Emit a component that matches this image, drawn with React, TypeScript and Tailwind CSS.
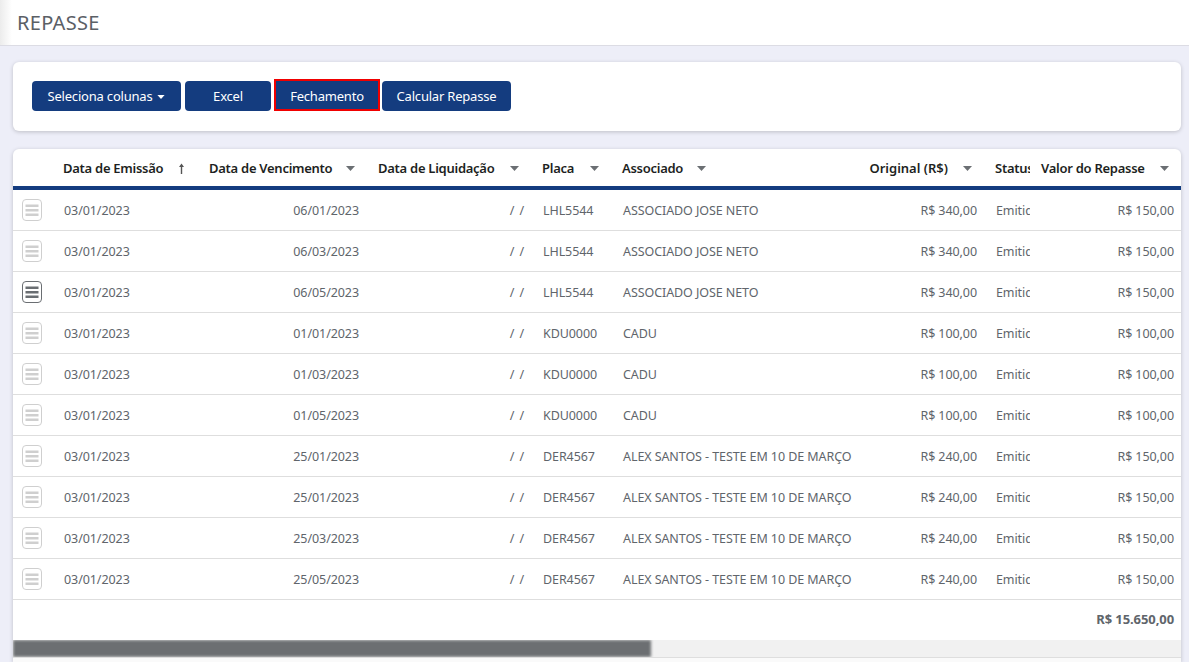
import React from 'react';

interface IRepasse {
  vencimento: string;
  placa: string;
  associado: string;
  original: string;
  repasse: string;
}

const ALEX = 'ALEX SANTOS - TESTE EM 10 DE MARÇO';
const JOSE = 'ASSOCIADO JOSE NETO';

const rows: IRepasse[] = [
  { vencimento: '06/01/2023', placa: 'LHL5544', associado: JOSE, original: 'R$ 340,00', repasse: 'R$ 150,00' },
  { vencimento: '06/03/2023', placa: 'LHL5544', associado: JOSE, original: 'R$ 340,00', repasse: 'R$ 150,00' },
  { vencimento: '06/05/2023', placa: 'LHL5544', associado: JOSE, original: 'R$ 340,00', repasse: 'R$ 150,00' },
  { vencimento: '01/01/2023', placa: 'KDU0000', associado: 'CADU', original: 'R$ 100,00', repasse: 'R$ 100,00' },
  { vencimento: '01/03/2023', placa: 'KDU0000', associado: 'CADU', original: 'R$ 100,00', repasse: 'R$ 100,00' },
  { vencimento: '01/05/2023', placa: 'KDU0000', associado: 'CADU', original: 'R$ 100,00', repasse: 'R$ 100,00' },
  { vencimento: '25/01/2023', placa: 'DER4567', associado: ALEX, original: 'R$ 240,00', repasse: 'R$ 150,00' },
  { vencimento: '25/01/2023', placa: 'DER4567', associado: ALEX, original: 'R$ 240,00', repasse: 'R$ 150,00' },
  { vencimento: '25/03/2023', placa: 'DER4567', associado: ALEX, original: 'R$ 240,00', repasse: 'R$ 150,00' },
  { vencimento: '25/05/2023', placa: 'DER4567', associado: ALEX, original: 'R$ 240,00', repasse: 'R$ 150,00' },
];

function Caret({ className = '' }: { className?: string }) {
  return (
    <svg width="9" height="5" viewBox="0 0 9 5" className={className}>
      <path d="M0 0h9L4.5 5z" fill="currentColor" />
    </svg>
  );
}

function RowIcon({ active }: { active?: boolean }) {
  return (
    <svg width="20" height="22" viewBox="0 0 20 22" className={`block ${active ? 'text-[#6a6e72]' : 'text-[#cfcfcf]'}`}>
      <rect x="0.5" y="0.5" width="19" height="21" rx="3.5" fill="none" stroke="currentColor" />
      <rect x="3.5" y="5.5" width="13" height="2.5" fill="currentColor" />
      <rect x="3.5" y="10" width="13" height="2.5" fill="currentColor" />
      <rect x="3.5" y="14.5" width="13" height="2.5" fill="currentColor" />
    </svg>
  );
}

function Btn({ children, className = '' }: { children: React.ReactNode; className?: string }) {
  return (
    <button className={`flex h-[30px] items-center justify-center rounded-[4px] bg-[#143c7f] pt-[2px] text-[13px] tracking-[-0.2px] text-white ${className}`}>
      {children}
    </button>
  );
}

const thClass = 'border-b-4 border-[#143c7f] pt-[2px] font-semibold';
const tdClass = 'border-b border-[#dedede] pt-[2px]';

export default function App() {
  return (
    <div className="h-[662px] overflow-hidden bg-[#edeef8] font-['Noto_Sans',sans-serif] text-[#60656b]">
      {/* Title */}
      <div className="flex h-[46px] items-center border-b border-[#dcdce4] bg-white bg-gradient-to-r from-[#ececec] to-white to-[1%] pl-[17px] text-[20px] tracking-[0.3px] text-[#5b6066]">
        REPASSE
      </div>

      <div className="flex flex-col gap-[18px] pl-[13px] pr-[8px] pt-[16px]">
        {/* Actions */}
        <div className="flex h-[69px] items-end gap-[4px] rounded-[6px] bg-white pb-[20px] pl-[19px] shadow-[0_1px_4px_rgba(0,0,0,0.2)]">
          <Btn className="w-[149px] gap-[5px]">
            Seleciona colunas <Caret className="h-[4px] w-[8px]" />
          </Btn>
          <Btn className="w-[86px]">Excel</Btn>
          <Btn className="ml-[-1px] mr-[-2px] h-[32px] w-[106px] rounded-none border-2 border-[#f00000] pt-[4px]">Fechamento</Btn>
          <Btn className="w-[129px]">Calcular Repasse</Btn>
        </div>

        {/* Table */}
        <div className="overflow-hidden rounded-t-[6px] bg-white shadow-[0_1px_4px_rgba(0,0,0,0.2)]">
          <table className="w-full table-fixed border-separate border-spacing-0 text-[12.5px]">
            <colgroup>
              <col className="w-[44px]" />
              <col className="w-[146px]" />
              <col className="w-[163px]" />
              <col className="w-[165px]" />
              <col className="w-[84px]" />
              <col className="w-[240px]" />
              <col className="w-[130px]" />
              <col className="w-[45px]" />
              <col />
            </colgroup>
            <thead>
              <tr className="h-[41px] text-left text-[13px] tracking-[-0.27px] text-[#1d1f22]">
                <th className={thClass} />
                <th className={`${thClass} pl-[6px]`}>
                  <div className="flex items-center justify-between pr-[18px]">
                    Data de Emissão
                    <svg width="7" height="11" viewBox="0 0 7 11" className="text-[#555]">
                      <path d="M3.5 0.5L6 4H4.2V11H2.8V4H1z" fill="currentColor" />
                    </svg>
                  </div>
                </th>
                <th className={`${thClass} pl-[6px]`}>
                  <div className="flex items-center justify-between pr-[11px]">
                    Data de Vencimento
                    <Caret className="text-[#6b6f73]" />
                  </div>
                </th>
                <th className={`${thClass} pl-[12px]`}>
                  <div className="flex items-center justify-between pr-[12px]">
                    Data de Liquidação
                    <Caret className="text-[#6b6f73]" />
                  </div>
                </th>
                <th className={`${thClass} pl-[11px]`}>
                  <div className="flex items-center justify-between pr-[16px]">
                    Placa
                    <Caret className="text-[#6b6f73]" />
                  </div>
                </th>
                <th className={`${thClass} pl-[7px]`}>
                  <div className="flex items-center gap-[14px]">
                    Associado
                    <Caret className="text-[#6b6f73]" />
                  </div>
                </th>
                <th className={thClass}>
                  <div className="flex items-center justify-end gap-[15px] pr-[13px] tracking-[0]">
                    Original (R$)
                    <Caret className="text-[#6b6f73]" />
                  </div>
                </th>
                <th className={`${thClass} overflow-hidden whitespace-nowrap pl-[10px]`}>Status</th>
                <th className={thClass}>
                  <div className="flex items-center justify-between pl-[11px] pr-[12px]">
                    Valor do Repasse
                    <Caret className="text-[#6b6f73]" />
                  </div>
                </th>
              </tr>
            </thead>
            <tbody className="tracking-[-0.08px]">
              {rows.map((row, index) => (
                <tr key={index} className="h-[41px]">
                  <td className="border-b border-[#dedede] pl-[9px]">
                    <RowIcon active={index === 2} />
                  </td>
                  <td className={`${tdClass} pl-[7px]`}>03/01/2023</td>
                  <td className={`${tdClass} pr-[7px] text-right`}>{row.vencimento}</td>
                  <td className={`${tdClass} pr-[7px] text-right [word-spacing:2px]`}>/ /</td>
                  <td className={`${tdClass} pl-[12px]`}>{row.placa}</td>
                  <td className={`${tdClass} whitespace-nowrap pl-[8px]`}>{row.associado}</td>
                  <td className={`${tdClass} pr-[8px] text-right`}>{row.original}</td>
                  <td className={`${tdClass} overflow-hidden whitespace-nowrap pl-[11px]`}>Emitido</td>
                  <td className={`${tdClass} pr-[7px] text-right`}>{row.repasse}</td>
                </tr>
              ))}
              <tr className="h-[40px]">
                <td colSpan={9} className="pr-[7px] text-right text-[13px] font-bold">
                  R$ 15.650,00
                </td>
              </tr>
            </tbody>
          </table>

          {/* Horizontal scrollbar */}
          <div className="h-[17px] overflow-hidden bg-[#f1f1f1]">
            <div className="h-full w-[638px] bg-[#6c6f72] blur-[1.5px]" />
          </div>
          <div className="h-[5px] border-t border-[#dedede] bg-[#fafafa]" />
        </div>
      </div>
    </div>
  );
}
